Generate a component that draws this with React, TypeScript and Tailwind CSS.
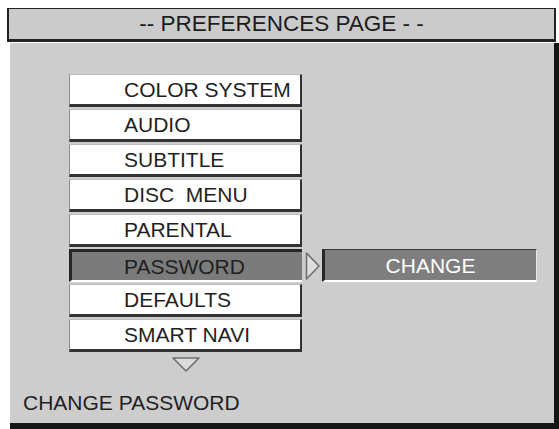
import React from 'react';

const ITEMS = [
  'COLOR SYSTEM',
  'AUDIO',
  'SUBTITLE',
  'DISC  MENU',
  'PARENTAL',
  'PASSWORD',
  'DEFAULTS',
  'SMART NAVI',
];
const SELECTED = 'PASSWORD';

const font = { fontFamily: '"Liberation Sans", Arial, sans-serif' };

function RightPointer() {
  return (
    <svg width="16" height="30" viewBox="0 0 16 30" className="shrink-0">
      <path d="M1.5 2 L14 15 L1.5 28 Z" fill="#dedede" stroke="#6f6f6f" strokeWidth="1.6" strokeLinejoin="round" />
    </svg>
  );
}

function DownPointer() {
  return (
    <svg width="30" height="17" viewBox="0 0 30 17">
      <path d="M2 2 L28 2 L15 15 Z" fill="#dcdcdc" stroke="#6f6f6f" strokeWidth="1.6" strokeLinejoin="round" />
    </svg>
  );
}

export default function App() {
  return (
    <div className="w-[559px] h-[429px] bg-white flex flex-col overflow-hidden" style={font}>
      {/* title bar */}
      <div className="mt-[8px] ml-[7px] w-[549px] h-[34px] bg-[#cbcbcb] border-t border-l-2 border-r-2 border-b-[3px] border-[#222] flex items-center justify-center">
        <span className="text-[22.5px] leading-none text-[#1c1c1c] whitespace-pre">-- PREFERENCES PAGE - -</span>
      </div>

      {/* panel */}
      <div className="mt-[1px] ml-[10px] w-[549px] flex-1 bg-[#cdcdcd] border-r-[5px] border-b-[6px] border-[#151515] flex flex-col pl-[13px]">
        <div className="ml-[46px] mt-[31px] flex flex-col gap-[2px]">
          {ITEMS.map((label) =>
            label === SELECTED ? (
              <div key={label} className="flex items-center">
                <div className="w-[233px] h-[33px] bg-[#7b7b7b] border-l-[3px] border-t-[3px] border-b-2 border-l-[#262626] border-t-[#262626] border-b-white flex items-center pl-[52px]">
                  <span className="text-[21px] leading-none text-[#1f1f1f] whitespace-pre">{label}</span>
                </div>
                <div className="ml-[3px]">
                  <RightPointer />
                </div>
                <div className="ml-[1px] w-[215px] h-[33px] bg-[#7e7e7e] border-l-[3px] border-t border-b-2 border-r border-l-[#262626] border-t-[#3a3a3a] border-b-white border-r-[#e6e6e6] flex items-center justify-center">
                  <span className="text-[21px] leading-none text-white">CHANGE</span>
                </div>
              </div>
            ) : (
              <div
                key={label}
                className="w-[233px] h-[33px] bg-white border-l border-t border-r-2 border-b-[3px] border-l-[#8a8a8a] border-t-[#bdbdbd] border-r-[#333] border-b-[#333] flex items-center pl-[54px]"
              >
                <span className="text-[21px] leading-none text-[#1f1f1f] whitespace-pre">{label}</span>
              </div>
            )
          )}
          <div className="w-[233px] mt-[2px] flex justify-center">
            <DownPointer />
          </div>
        </div>
        <div className="mt-[18px] text-[21px] leading-[24px] text-[#1f1f1f]">CHANGE PASSWORD</div>
      </div>
    </div>
  );
}
